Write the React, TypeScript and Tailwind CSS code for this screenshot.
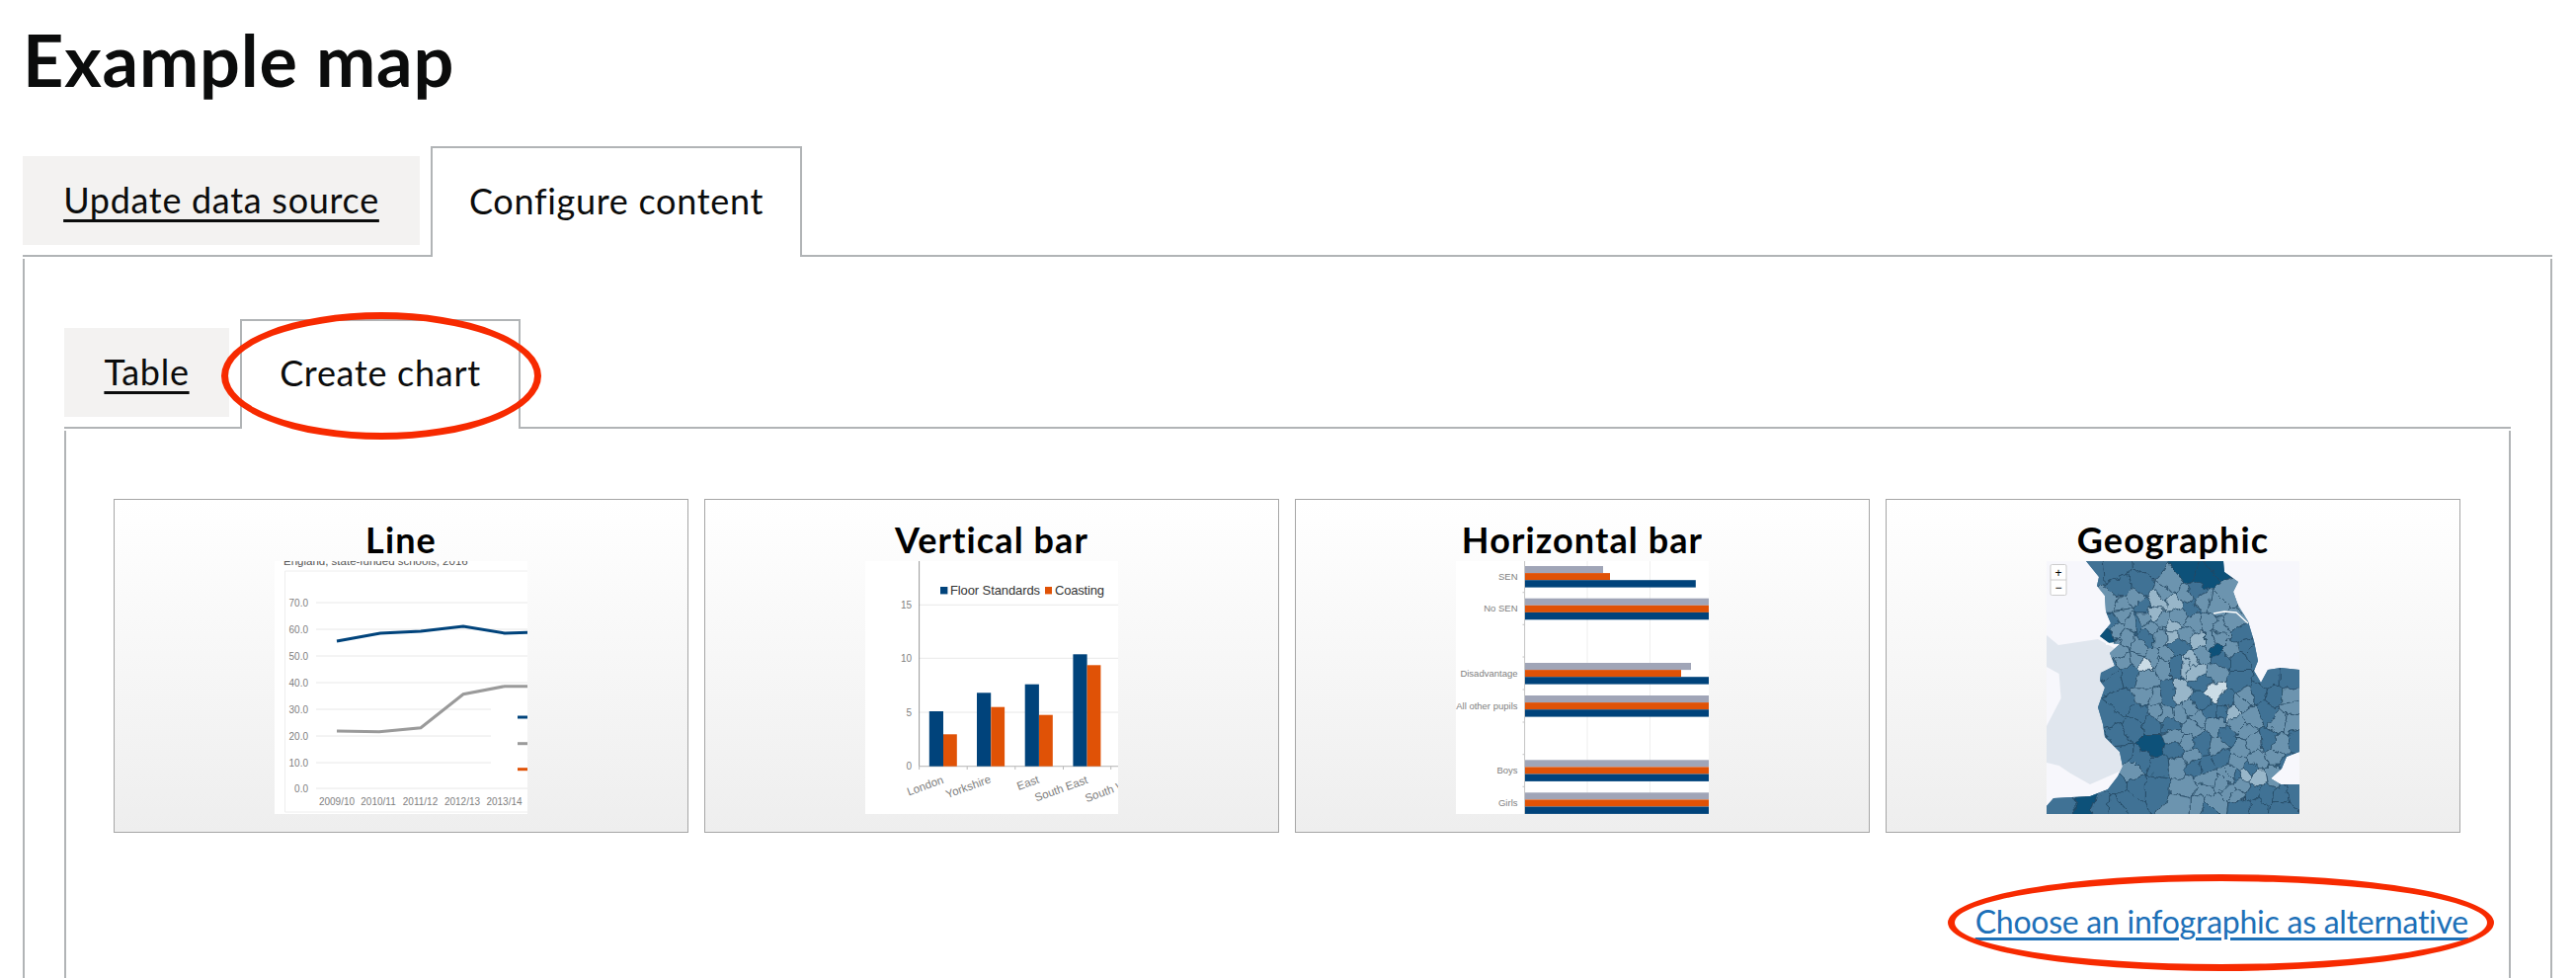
import React from 'react';

const BLUE = '#00437b';
const ORANGE = '#e05206';
const GREY_LABEL = '#808080';

// charts in the thumbnails, all drawn in a 256x256 box
const LineChart = () => {
  const grid = [42, 69, 96, 123, 150, 177, 204, 230];
  const labels = ['70.0', '60.0', '50.0', '40.0', '30.0', '20.0', '10.0', '0.0'];
  const years = [
    ['2009/10', 63],
    ['2010/11', 105],
    ['2011/12', 147.5],
    ['2012/13', 190],
    ['2013/14', 232.5],
  ] as const;
  return (
    <svg width="256" height="256" viewBox="0 0 256 256" className="block bg-white">
      <text x="9" y="4" fontSize="11.5" fill="#555" fontFamily="Liberation Sans, sans-serif">
        England, state-funded schools, 2016
      </text>
      <path d="M256 10H10.5V254H256" fill="none" stroke="#eeeeee" strokeWidth="1" />
      {grid.map((y, i) => (
        <g key={y}>
          <line x1="42" x2={i >= 4 && i < 7 ? 219 : 256} y1={y} y2={y} stroke="#e8e8e8" strokeWidth="1" />
          <text x="34" y={y + 3.5} textAnchor="end" fontSize="10" fill={GREY_LABEL} fontFamily="Liberation Sans, sans-serif">
            {labels[i]}
          </text>
        </g>
      ))}
      <polyline points="63,81 107,73 148,71 191,66 233,73 256,72.3" fill="none" stroke={BLUE} strokeWidth="3" />
      <polyline points="63,172 106,172.7 148,168.7 191,134.7 233,126.7 256,126.7" fill="none" stroke="#9a9a9a" strokeWidth="3" />
      <line x1="246" x2="256" y1="158" y2="158" stroke={BLUE} strokeWidth="3" />
      <line x1="246" x2="256" y1="184.7" y2="184.7" stroke="#9a9a9a" strokeWidth="3" />
      <line x1="246" x2="256" y1="210.7" y2="210.7" stroke={ORANGE} strokeWidth="3" />
      {years.map(([label, x]) => (
        <text key={label} x={x} y="247" textAnchor="middle" fontSize="10" fill={GREY_LABEL} fontFamily="Liberation Sans, sans-serif">
          {label}
        </text>
      ))}
    </svg>
  );
};

const VerticalBarChart = () => {
  const bars = [
    [64.8, 152, 79, 175.3],
    [113, 133.3, 127.3, 147.7],
    [161.7, 124.7, 176, 155.7],
    [210.4, 94.3, 224.6, 105.3],
  ];
  const axisLabels = [
    ['15', 44.3],
    ['10', 98.3],
    ['5', 153],
    ['0', 207.7],
  ] as const;
  const xLabels = [
    ['London', 62, 231],
    ['Yorkshire', 105.6, 232],
    ['East', 166, 228],
    ['South East', 199.7, 234],
    ['South West', 252, 234],
  ] as const;
  return (
    <svg width="256" height="256" viewBox="0 0 256 256" className="block bg-white" fontFamily="Liberation Sans, sans-serif">
      {axisLabels.map(([label, y]) => (
        <g key={label}>
          <line x1="54" x2="256" y1={y} y2={y} stroke="#e8e8e8" />
          <text x="47" y={y + 3.5} textAnchor="end" fontSize="10" fill={GREY_LABEL}>
            {label}
          </text>
        </g>
      ))}
      <line x1="54.6" x2="54.6" y1="0" y2="208" stroke="#999" />
      <line x1="54" x2="256" y1="207.7" y2="207.7" stroke="#bbb" />
      {[54.6, 103.2, 151.8, 200.5, 248.7].map((x) => (
        <line key={x} x1={x} x2={x} y1="208" y2="211" stroke="#bbb" />
      ))}
      {bars.map(([bx, by, ox, oy]) => (
        <g key={bx}>
          <rect x={bx} y={by} width="14.2" height={207.7 - by} fill={BLUE} />
          <rect x={ox} y={oy} width="13.8" height={207.7 - oy} fill={ORANGE} />
        </g>
      ))}
      <rect x="76" y="26" width="7.4" height="7.4" fill={BLUE} />
      <text x="86" y="34" fontSize="13" fill="#333" textLength="91">
        Floor Standards
      </text>
      <rect x="182" y="26" width="7" height="7.4" fill={ORANGE} />
      <text x="192" y="34" fontSize="13" fill="#333" textLength="50">
        Coasting
      </text>
      {xLabels.map(([label, x, y]) => (
        <text
          key={label}
          x={x}
          y={y}
          textAnchor="middle"
          fontSize="11.5"
          fill={GREY_LABEL}
          transform={`rotate(-20 ${x} ${y})`}
        >
          {label}
        </text>
      ))}
    </svg>
  );
};

const HorizontalBarChart = () => {
  const groups = [
    ['SEN', 5, 79, 86, 172.8],
    ['No SEN', 37.7, 187, 187, 187],
    ['Disadvantage', 103, 168, 158, 187],
    ['All other pupils', 136, 187, 187, 187],
    ['Boys', 201.3, 187, 187, 187],
    ['Girls', 234.3, 187, 187, 187],
  ] as const;
  return (
    <svg width="256" height="256" viewBox="0 0 256 256" className="block bg-white" fontFamily="Liberation Sans, sans-serif">
      <line x1="133" x2="133" y1="0" y2="256" stroke="#eeeeee" />
      <line x1="196.5" x2="196.5" y1="0" y2="256" stroke="#eeeeee" />
      <line x1="69.6" x2="69.6" y1="0" y2="256" stroke="#c4c4c4" />
      {[31.7, 64.3, 97, 130, 163, 195.7, 228.3].map((y) => (
        <line key={y} x1="67.5" x2="69.6" y1={y} y2={y} stroke="#c4c4c4" />
      ))}
      {groups.map(([label, y, g, o, b]) => (
        <g key={label}>
          <rect x="70" y={y} width={g} height="7.1" fill="#a0a5b7" />
          <rect x="70" y={y + 7.1} width={o} height="7.1" fill={ORANGE} />
          <rect x="70" y={y + 14.2} width={b} height="7.4" fill={BLUE} />
          <text x="62.5" y={y + 13.5} textAnchor="end" fontSize="9.5" fill={GREY_LABEL}>
            {label}
          </text>
        </g>
      ))}
    </svg>
  );
};

// map regions are voronoi cells grown from hand placed seeds, colour key a-e
const shades: Record<string, string> = {
  a: '#0f5179',
  b: '#3f7295',
  c: '#6c94af',
  d: '#98b6c9',
  e: '#cbdce6',
};

// seed positions read off the top half / bottom half of the map, in 3x px
const northSeeds = `150,30,b 210,25,b 320,20,b 240,90,b 295,75,b 385,75,c 440,30,a 490,50,a 530,20,a 460,100,b 530,140,c 560,110,c 450,145,b 395,135,d 350,130,d 270,115,c 210,130,c 235,138,c 300,150,b 340,165,d 210,190,b 240,170,c 268,190,c 288,188,b 325,215,c 300,180,c 360,180,c 410,175,c 395,205,d 392,232,d 185,240,a 225,215,c 250,235,c 315,235,b 350,235,c 430,230,c 455,195,c 535,210,c 530,240,c 610,265,b 595,305,b 470,250,d 525,275,a 540,305,b 480,290,c 410,265,b 230,280,c 290,265,c 330,305,c 280,305,c 370,290,c 405,320,b 435,320,d 450,310,d 465,340,d 525,345,c 480,370,b 215,360,b 260,350,b 310,360,c 595,370,b 680,360,b 750,360,b 310,320,e 620,130,c 575,190,c 500,190,c 480,130,c 430,110,c 370,105,c 600,230,b 640,290,b 570,275,c 505,250,c 360,320,c 245,310,c 200,340,b`;
const southSeeds = `240,50,b 225,140,b 270,120,b 330,175,a 400,190,b 330,110,b 385,110,b 310,30,c 340,40,c 380,30,b 415,25,d 440,60,c 410,75,c 470,95,c 480,170,b 520,110,c 550,40,b 575,75,d 520,15,e 620,30,c 650,20,b 700,30,b 750,30,c 680,70,b 630,90,c 720,100,c 750,105,c 610,130,c 680,165,b 640,170,c 600,185,c 560,150,b 540,210,b 490,235,b 460,240,b 405,235,c 430,170,c 340,300,b 265,255,c 280,300,b 225,295,b 250,340,b 130,345,a 60,350,b 180,360,b 220,365,b 430,305,c 420,355,c 490,310,c 520,350,c 560,310,c 590,330,c 630,320,b 680,325,b 720,330,b 760,320,b 600,360,b 650,360,b 720,370,b 500,370,b 470,355,c 570,260,c 610,265,d 590,270,b 560,270,c 630,250,b 540,290,c 600,300,c 650,270,d 700,265,c 740,240,b 770,165,b 720,180,c 700,210,c 650,220,c 755,60,c 510,70,b 370,80,c 290,80,b 340,70,c 540,70,b 600,50,c 590,110,c 480,45,b 450,120,c 450,210,c 530,180,c 590,225,c 500,280,c 400,150,c 350,240,b 300,220,b 230,210,b 210,90,b 170,170,b 120,310,b`;

type Seed = { x: number; y: number; key: string };

const parseSeeds = (raw: string, yOffset: number): Seed[] =>
  raw.split(' ').map((s) => {
    const [x, y, key] = s.split(',');
    return { x: Number(x) / 3 - 3, y: Number(y) / 3 + yOffset, key };
  });

const seeds = [...parseSeeds(northSeeds, -2), ...parseSeeds(southSeeds, 128)];

// clip the box by the bisector of every other seed
const cellFor = (seed: Seed) => {
  let poly: number[][] = [
    [-10, -10],
    [266, -10],
    [266, 266],
    [-10, 266],
  ];
  for (const other of seeds) {
    if (other === seed) continue;
    const mx = (seed.x + other.x) / 2;
    const my = (seed.y + other.y) / 2;
    const nx = other.x - seed.x;
    const ny = other.y - seed.y;
    const side = (p: number[]) => (p[0] - mx) * nx + (p[1] - my) * ny;
    const next: number[][] = [];
    poly.forEach((p, i) => {
      const q = poly[(i + 1) % poly.length];
      const sp = side(p);
      const sq = side(q);
      if (sp <= 0) next.push(p);
      if (sp * sq < 0) {
        const t = sp / (sp - sq);
        next.push([p[0] + (q[0] - p[0]) * t, p[1] + (q[1] - p[1]) * t]);
      }
    });
    poly = next;
    if (!poly.length) break;
  }
  return poly.map((p) => `${p[0].toFixed(1)},${p[1].toFixed(1)}`).join(' ');
};

const LAND =
  'M40 0L53 16L51 25L59 35L60 51L65 63L54 76L65 84L74 84L64 93L69 106L55 113L54 121L59 128L52 148L57 165L59 178L74 193L77 208L72 218L62 231L44 238L7 240L0 248V256H256V253V226L237 226L227 220L238 210L243 198L256 193V110L237 108L224 110L217 123L210 111L214 101L210 81L204 61L194 45L189 31L194 21L180 11L179 0Z';

const MapChart = () => (
  <svg width="256" height="256" viewBox="0 0 256 256" className="block bg-[#f7f7fc]">
    <defs>
      <clipPath id="land">
        <path d={LAND} />
      </clipPath>
      <filter id="wobble" x="-5%" y="-5%" width="110%" height="110%">
        <feTurbulence type="fractalNoise" baseFrequency="0.12" numOctaves="2" seed="4" result="noise" />
        <feDisplacementMap in="SourceGraphic" in2="noise" scale="9" xChannelSelector="R" yChannelSelector="G" />
      </filter>
    </defs>
    <path
      d="M0 75L12 85L52 79L90 100V212H76L44 226L24.5 215L12.6 207L0 204V167L14.6 139L12.6 114L0 107Z"
      fill="#e0e6ee"
    />
    <g clipPath="url(#land)">
      <rect width="256" height="256" fill={shades.b} />
      <g filter="url(#wobble)">
        {seeds.map((seed, i) => (
          <polygon
            key={i}
            points={cellFor(seed)}
            fill={shades[seed.key]}
            stroke="#23455f"
            strokeWidth="0.7"
          />
        ))}
      </g>
    </g>
    <path d="M169 53L180 51L192 52L204 63" fill="none" stroke="#ffffff" strokeWidth="1.3" />
    <path d="M60 84L68 83" fill="none" stroke="#ffffff" strokeWidth="1.5" />
    <rect x="4" y="3.5" width="16" height="31" rx="1.5" fill="#ffffff" stroke="#cccccc" />
    <line x1="4" x2="20" y1="19" y2="19" stroke="#cccccc" />
    <text x="12" y="16" textAnchor="middle" fontSize="12" fill="#000" fontFamily="Liberation Sans, sans-serif">
      +
    </text>
    <text x="12" y="31" textAnchor="middle" fontSize="12" fill="#000" fontFamily="Liberation Sans, sans-serif">
      −
    </text>
  </svg>
);

const ChartCard = ({ title, children }: { title: string; children: React.ReactNode }) => (
  <div className="h-[338px] border border-[#a6a6a6] bg-linear-to-b from-white to-[#eeeeee] flex flex-col items-center">
    <h3 className="mt-[19px] h-[43px] text-[36px] leading-[42px] font-bold tracking-[1.1px] text-black whitespace-nowrap">{title}</h3>
    {children}
  </div>
);

export default function App() {
  return (
    <div className="relative h-[990px] overflow-hidden bg-white text-[#0b0c0c] pl-[23px] pr-[24px] font-['Lato','Noto_Sans',sans-serif]">
      <h1 className="h-[148px] pt-[16px] text-[72px] leading-[88px] font-bold tracking-[0.8px]">Example map</h1>

      <div className="flex items-start h-[112px] border-b-2 border-[#b1b4b6]">
        <a className="mt-[10px] mr-[11px] h-[90px] w-[402px] text-center bg-[#f3f2f1] text-[36px] leading-[88px] tracking-[0.7px] underline underline-offset-[6px] decoration-[3px] whitespace-nowrap">
          Update data source
        </a>
        <div className="relative h-[112px] w-[376px] text-center bg-white border-2 border-b-0 border-[#b1b4b6] text-[36px] leading-[106px] tracking-[0.7px] whitespace-nowrap">
          Configure content
        </div>
      </div>

      <div className="mt-[2px] h-[900px] border-x-2 border-[#b1b4b6] pl-[40px] pr-[40px] pt-[61px]">
        <div className="flex items-start h-[111px] border-b-2 border-[#b1b4b6]">
          <a className="mt-[9px] mr-[11px] h-[90px] w-[167px] text-center bg-[#f3f2f1] text-[36px] leading-[88px] tracking-[0.7px] underline underline-offset-[6px] decoration-[3px] whitespace-nowrap">
            Table
          </a>
          <div className="h-[111px] w-[284px] text-center bg-white border-2 border-b-0 border-[#b1b4b6] text-[36px] leading-[104px] tracking-[0.7px] whitespace-nowrap">
            Create chart
          </div>
        </div>

        <div className="mt-[2px] h-[800px] border-x-2 border-[#b1b4b6] pl-[48px] pr-[49px] pt-[69px]">
          <div className="grid grid-cols-4 gap-[16px]">
            <ChartCard title="Line">
              <LineChart />
            </ChartCard>
            <ChartCard title="Vertical bar">
              <VerticalBarChart />
            </ChartCard>
            <ChartCard title="Horizontal bar">
              <HorizontalBarChart />
            </ChartCard>
            <ChartCard title="Geographic">
              <MapChart />
            </ChartCard>
          </div>
          <div className="mt-[68px] flex justify-end">
            <a className="text-[#1d70b8] text-[32px] leading-[44px] tracking-[-0.25px] underline underline-offset-[4px] decoration-[3px] whitespace-nowrap -mr-[8px]">
              Choose an infographic as alternative
            </a>
          </div>
        </div>
      </div>

      {/* hand drawn style annotation rings over the page */}
      <div className="absolute left-[224px] top-[316px] w-[324px] h-[129px] rounded-[50%] border-[7px] border-[#f72a00]" />
      <div className="absolute left-[1972px] top-[885px] w-[553px] h-[98px] rounded-[50%] border-[7px] border-[#f72a00]" />
    </div>
  );
}
